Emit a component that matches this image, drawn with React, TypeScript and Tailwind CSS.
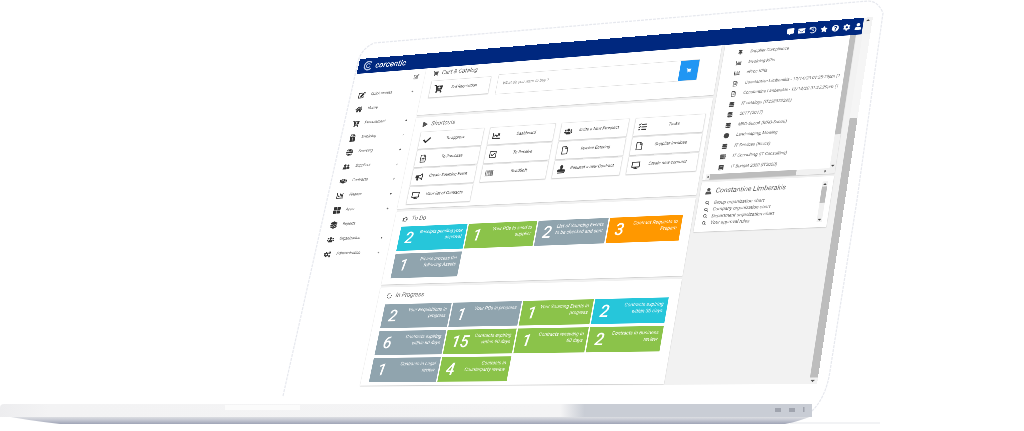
import React from 'react';
import {
  FaBarcode, FaBook, FaBullhorn, FaChartBar, FaChartLine, FaCheck, FaCircle, FaCog, FaCogs,
  FaCommentAlt, FaDatabase, FaDesktop, FaEdit, FaEnvelope, FaFileInvoiceDollar, FaGlobe, FaHandshake,
  FaHistory, FaHome, FaLayerGroup, FaPlay, FaPlus, FaQuestionCircle, FaRegCheckSquare, FaRegFile,
  FaRegFileAlt, FaRegHandPointRight, FaSearch, FaServer, FaShoppingCart, FaStamp, FaStar, FaTasks,
  FaThLarge, FaThumbtack, FaUser, FaUserFriends, FaUsers, FaCaretUp, FaCaretDown, FaCaretLeft, FaCaretRight,
  FaCartPlus, FaSpinner,
} from 'react-icons/fa';

const W = 1100;
const H = 720;

// screen corners in the picture: TL, TR, BR, BL
const QUAD = [[360, 59], [873, 17], [817, 385], [288, 388]];

const screenMatrix = () => {
  const [[x0, y0], [x1, y1], [x2, y2], [x3, y3]] = QUAD;
  const sx = x0 - x1 + x2 - x3;
  const sy = y0 - y1 + y2 - y3;
  const dx1 = x1 - x2;
  const dx2 = x3 - x2;
  const dy1 = y1 - y2;
  const dy2 = y3 - y2;
  const det = dx1 * dy2 - dx2 * dy1;
  const g = (sx * dy2 - dx2 * sy) / det;
  const h = (dx1 * sy - sx * dy1) / det;
  const a = x1 - x0 + g * x1;
  const b = x3 - x0 + h * x3;
  const d = y1 - y0 + g * y1;
  const e = y3 - y0 + h * y3;
  return `matrix3d(${a / W},${d / W},0,${g / W},${b / H},${e / H},0,${h / H},0,0,1,0,${x0},${y0},0,1)`;
};

const sidebarItems = [
  { label: 'Quick access', icon: FaEdit, plus: true },
  { label: 'Home', icon: FaHome, plus: false },
  { label: 'Procurement', icon: FaCartPlus, plus: true },
  { label: 'Invoicing', icon: FaFileInvoiceDollar, plus: true },
  { label: 'Sourcing', icon: FaGlobe, plus: true },
  { label: 'Suppliers', icon: FaUserFriends, plus: true },
  { label: 'Contracts', icon: FaHandshake, plus: true },
  { label: 'Finance', icon: FaChartBar, plus: true },
  { label: 'Apps', icon: FaThLarge, plus: true },
  { label: 'Reports', icon: FaLayerGroup, plus: false },
  { label: 'Organization', icon: FaUsers, plus: true },
  { label: 'Administration', icon: FaCogs, plus: true },
];

const shortcutCols = [
  [
    { label: 'To approve', icon: FaCheck },
    { label: 'To Purchase', icon: FaRegFileAlt },
    { label: 'Create Sourcing Event', icon: FaBullhorn },
    { label: 'View list of Contracts', icon: FaDesktop },
  ],
  [
    { label: 'Dashboard', icon: FaChartLine },
    { label: 'To Receive', icon: FaRegCheckSquare },
    { label: 'ReadSoft', icon: FaBarcode },
  ],
  [
    { label: 'Invite a New Prospect', icon: FaUsers },
    { label: 'Invoice Entering', icon: FaRegFile },
    { label: 'Request a new Contract', icon: FaStamp },
  ],
  [
    { label: 'Tasks', icon: FaTasks },
    { label: 'Supplier Invoices', icon: FaRegFile },
    { label: 'Create new contract', icon: FaDesktop },
  ],
];

const cyan = 'bg-[#26c6da]';
const green = 'bg-[#8bc34a]';
const slate = 'bg-[#90a4ae]';
const orange = 'bg-[#ff9800]';

const todoTiles = [
  { n: '2', label: 'Receipts pending your approval', color: cyan },
  { n: '1', label: 'Your POs to send to supplier', color: green },
  { n: '2', label: 'List of Sourcing Events to be checked and sent', color: slate },
  { n: '3', label: 'Contract Requests to Prepare', color: orange },
  { n: '1', label: 'Please process the following Assets', color: slate },
];

const progressTiles = [
  { n: '2', label: 'Your Requisitions in progress', color: slate },
  { n: '1', label: 'Your POs in progress', color: slate },
  { n: '1', label: 'Your Sourcing Events in progress', color: green },
  { n: '2', label: 'Contracts expiring within 30 days', color: cyan },
  { n: '6', label: 'Contracts expiring within 60 days', color: slate },
  { n: '15', label: 'Contracts expiring within 90 days', color: green },
  { n: '1', label: 'Contracts renewing in 60 days', color: green },
  { n: '2', label: 'Contracts in Business review', color: green },
  { n: '1', label: 'Contracts in Legal review', color: slate },
  { n: '4', label: 'Contracts in Counterparty review', color: green },
];

const treeRows = [
  { label: 'Supplier Compliance', icon: FaThumbtack },
  { label: 'Invoicing KPIs', icon: FaChartBar },
  { label: 'eProc KPIs', icon: FaChartBar },
  { label: 'Constantine Limberakis - 12/14/20 01:25:29pm (1', icon: FaRegFileAlt },
  { label: 'Constantine Limberakis - 12/14/20 01:25:29pm (1', icon: FaRegFileAlt },
  { label: 'IT catalogs (IT238923292)', icon: FaDatabase },
  { label: '2017 (2017)', icon: FaDatabase },
  { label: 'MRO-Suco6 (MRO-Suco6)', icon: FaDatabase },
  { label: 'Landscaping, Mowing', icon: FaCircle },
  { label: 'IT Services (Itsvcs)', icon: FaDatabase },
  { label: 'IT Consulting (IT Consulting)', icon: FaServer },
  { label: 'IT Budget 2020 (IT2020)', icon: FaBook },
];

const orgLinks = [
  'Group organization chart',
  'Company organization chart',
  'Department organization chart',
  'Your approval rules',
];

const headerIcons = [FaCommentAlt, FaEnvelope, FaHistory, FaStar, FaQuestionCircle, FaCog, FaUser];

const Tile = ({ n, label, color, h }: { n: string; label: string; color: string; h: string }) => (
  <div className={`${color} ${h} flex text-white italic`}>
    <span className="pl-[14px] pr-[6px] text-[34px] leading-[50px] font-medium">{n}</span>
    <span className="flex-1 pt-[7px] pr-[8px] text-right text-[10px] leading-[13px]">{label}</span>
  </div>
);

const PanelTitle = ({ icon: Icon, title, h }: { icon: React.ElementType; title: string; h: string }) => (
  <div className={`${h} flex items-center gap-[8px] text-[#666]`}>
    <Icon className="w-[12px] h-[12px] text-[#555]" />
    <span className="text-[13px] italic">{title}</span>
  </div>
);

const Sidebar = () => (
  <div className="w-[165px] shrink-0 flex flex-col bg-white text-[#555]">
    <div className="h-[34px] flex justify-end items-center pr-[14px]">
      <FaEdit className="w-[12px] h-[12px] text-[#777]" />
    </div>
    {sidebarItems.map(({ label, icon: Icon, plus }) => (
      <div key={label} className="h-[32px] flex items-center pl-[16px] pr-[20px]">
        <Icon className="w-[16px] h-[16px] text-[#333] shrink-0" />
        <span className="ml-[13px] text-[8.8px] italic">{label}</span>
        {plus && <FaPlus className="ml-auto w-[5px] h-[5px] text-[#555]" />}
      </div>
    ))}
  </div>
);

const MainColumn = () => (
  <div className="w-[642px] shrink-0 flex flex-col gap-[6px]">
    <section className="h-[104px] bg-white pl-[18px] pr-[40px] shadow-[0_1px_2px_rgba(0,0,0,0.2)]">
      <PanelTitle icon={FaShoppingCart} title="Cart & Catalog" h="h-[26px]" />
      <div className="flex gap-[16px] items-center">
        <div className="w-[136px] h-[38px] flex items-center px-[8px] border border-[#ddd] shadow-[0_1px_2px_rgba(0,0,0,0.25)]">
          <FaCartPlus className="w-[20px] h-[20px] text-[#333]" />
          <span className="flex-1 text-center text-[9px] italic text-[#444]">3rd Requisition</span>
        </div>
        <div className="flex-1 h-[44px] flex items-center border border-[#ddd]">
          <span className="flex-1 pl-[12px] text-[9px] italic text-[#888]">What do you want to buy ?</span>
          <div className="w-[38px] h-full flex items-center justify-center bg-[#2196f3]">
            <FaShoppingCart className="w-[10px] h-[10px] text-white" />
          </div>
        </div>
      </div>
    </section>

    <section className="h-[199px] bg-white pl-[18px] pr-[8px] shadow-[0_1px_2px_rgba(0,0,0,0.2)]">
      <PanelTitle icon={FaPlay} title="Shortcuts" h="h-[32px]" />
      <div className="flex gap-[13px]">
        {shortcutCols.map((col, i) => (
          <div key={i} className="w-[144px] flex flex-col gap-[2px]">
            {col.map(({ label, icon: Icon }) => (
              <div key={label} className="h-[38px] flex items-center pl-[8px] pr-[4px] bg-white border border-[#e2e2e2] shadow-[0_1px_2px_rgba(0,0,0,0.25)]">
                <Icon className="w-[17px] h-[17px] text-[#333] shrink-0" />
                <span className="flex-1 text-center text-[9px] italic text-[#444] whitespace-nowrap">{label}</span>
              </div>
            ))}
          </div>
        ))}
      </div>
    </section>

    <section className="h-[156px] bg-white pl-[18px] pr-[20px] shadow-[0_1px_2px_rgba(0,0,0,0.2)]">
      <PanelTitle icon={FaRegHandPointRight} title="To Do" h="h-[33px]" />
      <div className="grid grid-cols-4 gap-x-[3px] gap-y-[6px]">
        {todoTiles.map((t, i) => <Tile key={i} {...t} h="h-[52px]" />)}
      </div>
    </section>

    <section className="h-[205px] bg-white pl-[18px] pr-[20px] shadow-[0_1px_2px_rgba(0,0,0,0.2)]">
      <PanelTitle icon={FaSpinner} title="In Progress" h="h-[36px]" />
      <div className="grid grid-cols-4 gap-x-[3px] gap-y-[6px]">
        {progressTiles.map((t, i) => <Tile key={i} {...t} h="h-[50px]" />)}
      </div>
    </section>
  </div>
);

const RightColumn = () => (
  <div className="w-[258px] shrink-0 flex flex-col gap-[5px]">
    <section className="h-[279px] bg-white flex flex-col shadow-[0_1px_2px_rgba(0,0,0,0.2)] overflow-hidden">
      <div className="flex-1 flex min-h-0">
        <div className="flex-1 min-w-0 overflow-hidden pl-[28px] pt-[8px]">
          {treeRows.map(({ label, icon: Icon }, i) => (
            <div key={i} className="h-[21.5px] flex items-center">
              <Icon className="w-[11px] h-[11px] shrink-0 text-[#444]" />
              <span className="ml-[14px] text-[8.7px] italic text-[#666] whitespace-nowrap">{label}</span>
            </div>
          ))}
        </div>
        <div className="w-[11px] shrink-0 flex flex-col bg-[#f1f1f1]">
          <div className="h-[201px] bg-[#bdbdbd]" />
          <div className="flex-1" />
          <FaCaretDown className="w-[11px] h-[10px] text-[#444]" />
        </div>
      </div>
      <div className="h-[11px] shrink-0 flex items-center bg-[#f1f1f1] ml-[6px]">
        <FaCaretLeft className="w-[8px] h-[9px] text-[#444]" />
        <div className="w-[170px] h-full bg-[#bdbdbd]" />
        <div className="flex-1" />
        <FaCaretRight className="w-[8px] h-[9px] text-[#444] mr-[14px]" />
      </div>
    </section>

    <section className="h-[100px] bg-white flex px-[10px] py-[8px] shadow-[0_1px_2px_rgba(0,0,0,0.2)]">
      <div className="flex-1">
        <div className="flex items-center gap-[8px] text-[#666]">
          <FaUser className="w-[13px] h-[13px] text-[#555]" />
          <span className="text-[13.5px] italic">Constantine Limberakis</span>
        </div>
        <div className="pt-[7px] pl-[4px]">
          {orgLinks.map(link => (
            <div key={link} className="h-[13.5px] flex items-center gap-[9px]">
              <FaSearch className="w-[8px] h-[8px] text-[#555]" />
              <span className="text-[9.3px] leading-[13px] italic text-[#666]">{link}</span>
            </div>
          ))}
        </div>
      </div>
      <div className="w-[10px] flex flex-col bg-[#f1f1f1] my-[2px]">
        <FaCaretUp className="w-[10px] h-[10px] text-[#444]" />
        <div className="h-[32px] bg-[#bdbdbd]" />
        <div className="flex-1" />
        <FaCaretDown className="w-[10px] h-[10px] text-[#444]" />
      </div>
    </section>
  </div>
);

const Screen = () => (
  <div
    className="absolute left-0 top-0 w-[1100px] h-[720px] origin-top-left flex flex-col bg-white font-['Roboto',sans-serif] [text-rendering:geometricPrecision]"
    style={{ transform: screenMatrix() }}
  >
    <div className="h-[34px] shrink-0 flex">
      <div className="flex-1 flex items-center bg-[#00287f] pl-[12px] pr-[2px]">
        <svg viewBox="0 0 24 24" className="w-[24px] h-[24px]" fill="none" stroke="#b9c6e4" strokeWidth="3">
          <path d="M19 5.5A9.5 9.5 0 1 0 19 18.5" />
          <path d="M16 10A4.5 4.5 0 1 0 16 14" strokeWidth="2" />
        </svg>
        <span className="ml-[5px] text-[18px] font-medium italic text-white">corcentic</span>
        <div className="ml-auto flex items-center gap-[8px]">
          {headerIcons.map((Icon, i) => <Icon key={i} className="w-[14px] h-[14px] text-white" />)}
        </div>
      </div>
      <div className="w-[17px] flex justify-center bg-[#f2f2f2]">
        <FaCaretUp className="w-[11px] h-[11px] text-[#444]" />
      </div>
    </div>

    <div className="flex-1 flex min-h-0 pb-[2px]">
      <Sidebar />
      <div className="flex-1 flex gap-[7px] bg-[#f2f2f2] min-w-0">
        <MainColumn />
        <RightColumn />
      </div>
      <div className="w-[22px] shrink-0 flex flex-col pl-[7px] bg-[#f2f2f2]">
        <div className="h-[170px] bg-[#f5f5f5]" />
        <div className="flex-1 bg-[#bdbdbd]" />
        <FaCaretDown className="w-[12px] h-[12px] text-[#555]" />
      </div>
    </div>
  </div>
);

const Laptop = () => (
  <svg viewBox="0 0 1024 431" className="absolute inset-0 w-[1024px] h-[431px]">
    <defs>
      <linearGradient id="deck" x1="0" x2="1" y1="0" y2="0">
        <stop offset="0" stopColor="#ededef" />
        <stop offset="0.06" stopColor="#f3f3f4" />
        <stop offset="0.69" stopColor="#f4f4f5" />
        <stop offset="0.72" stopColor="#c9cdd5" />
        <stop offset="1" stopColor="#c9cdd5" />
      </linearGradient>
      <linearGradient id="lip" x1="0" x2="0" y1="0" y2="1">
        <stop offset="0" stopColor="#eceded" />
        <stop offset="0.6" stopColor="#c2c5d0" />
        <stop offset="1" stopColor="#9fa4b6" />
      </linearGradient>
    </defs>
    <path
      d="M283 396 L358 62 Q361 49 374 43 L868 1 Q878 1 883 13 L857 200 L830 371 Q826 398 811 412"
      fill="none"
      stroke="#e6e8ee"
      strokeWidth="1.2"
      strokeDasharray="3 1"
    />
    <path d="M790 423 H880" stroke="#eeeff2" strokeWidth="1.5" />
    <path d="M0 415 Q25 420 60 424 H785 Q800 421 812 416 H0 Z" fill="url(#lip)" />
    <path d="M0 408 Q0 404 4 404 H812 V417 H0 Z" fill="url(#deck)" />
    <rect x="225" y="405" width="75" height="5" fill="#fbfbfb" />
    <rect x="775" y="408" width="6" height="4" fill="#a0a4ae" />
    <rect x="789" y="408" width="6" height="4" fill="#a0a4ae" />
    <rect x="803" y="407" width="1.5" height="5" fill="#a0a4ae" />
  </svg>
);

export default function App() {
  return (
    <div className="relative w-[1024px] h-[431px] bg-white overflow-hidden">
      <Laptop />
      <Screen />
    </div>
  );
}
